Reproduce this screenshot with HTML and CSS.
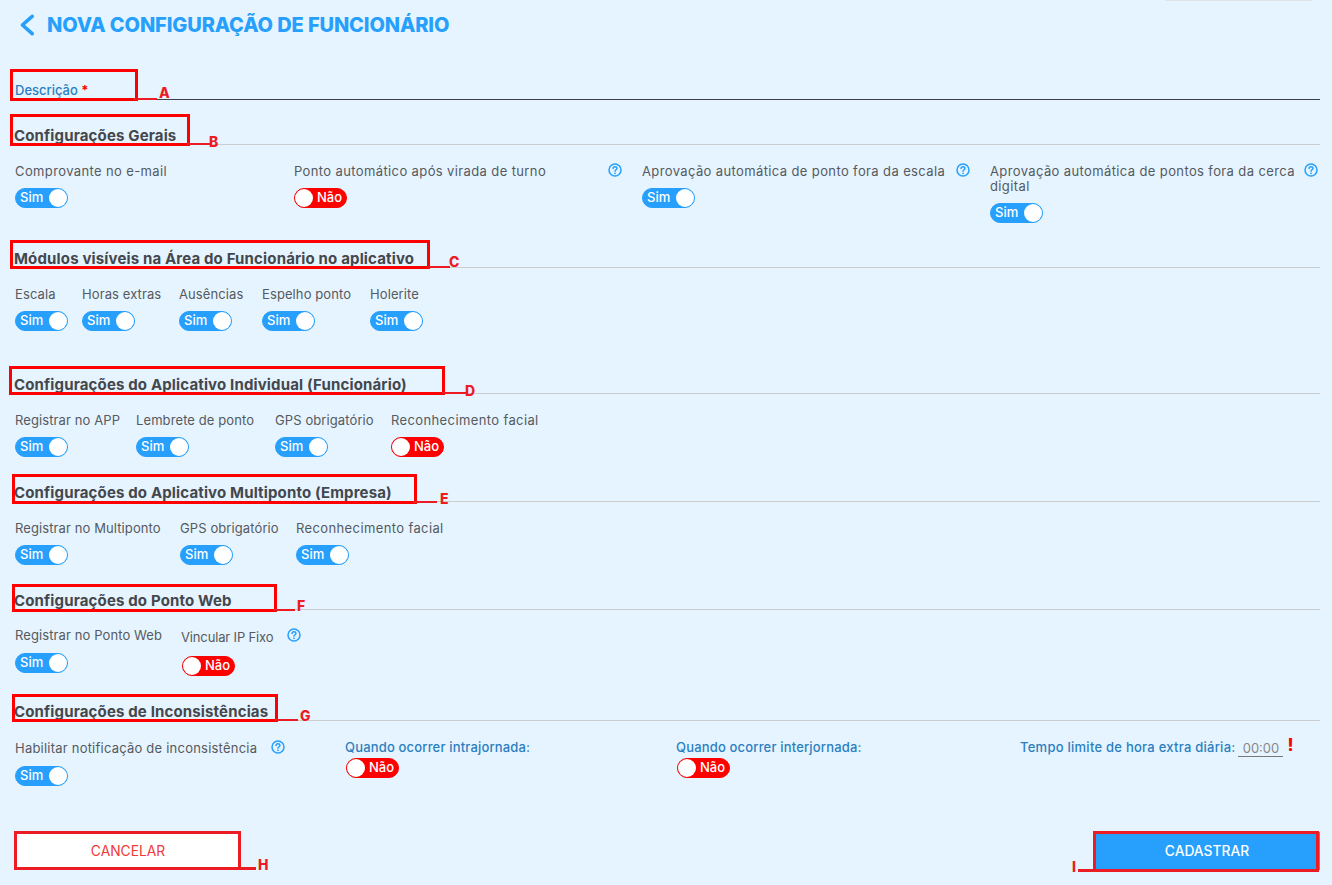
FILE: index.html
```html
<!DOCTYPE html>
<html lang="pt-BR">
<head>
<meta charset="utf-8">
<title>Nova configuração de funcionário</title>
<link rel="stylesheet" href="styles.css">
</head>
<body>
<svg class="defs" width="0" height="0" aria-hidden="true">
  <symbol id="help" viewBox="0 0 14 14">
    <circle cx="7" cy="7" r="6" fill="none" stroke="currentColor" stroke-width="1.5"/>
    <path d="M5.1 5.5C5.1 4.4 5.9 3.7 7 3.7S8.9 4.4 8.9 5.4C8.9 6.7 7 6.8 7 8.3" fill="none" stroke="currentColor" stroke-width="1.5" stroke-linecap="round"/>
    <circle cx="7" cy="10.3" r=".9" fill="currentColor"/>
  </symbol>
</svg>
<div class="page">
  <div class="topmark"></div>
  <main class="main">
    <header class="header">
      <svg class="back" viewBox="0 0 16 24" width="16" height="24" aria-hidden="true"><path d="M13.2 3.3 3.4 12l9.8 8.7" fill="none" stroke="currentColor" stroke-width="3.6" stroke-linecap="round" stroke-linejoin="round"/></svg>
      <h1 class="title">NOVA CONFIGURAÇÃO DE FUNCIONÁRIO</h1>
    </header>
    <div class="field"><span class="field-label">Descrição <b>*</b></span></div>

    <section class="section">
      <h2 class="heading">Configurações Gerais</h2>
      <div class="row cols-1">
        <div class="item"><div class="label label-wide">Comprovante no e-mail</div><div class="toggle on"><span>Sim</span><i></i></div></div>
        <div class="item"><div class="label-help"><div class="label label-wide">Ponto automático após virada de turno</div><svg class="help"><use href="#help"/></svg></div><div class="toggle off"><i></i><span>Não</span></div></div>
        <div class="item"><div class="label-help"><div class="label label-wide">Aprovação automática de ponto fora da escala</div><svg class="help"><use href="#help"/></svg></div><div class="toggle on"><span>Sim</span><i></i></div></div>
        <div class="item"><div class="label-help"><div class="label label-wide wrap">Aprovação automática de pontos fora da cerca digital</div><svg class="help"><use href="#help"/></svg></div><div class="toggle on"><span>Sim</span><i></i></div></div>
      </div>
    </section>

    <section class="section section-tall">
      <h2 class="heading">Módulos visíveis na Área do Funcionário no aplicativo</h2>
      <div class="row cols-2">
        <div class="item"><div class="label">Escala</div><div class="toggle on"><span>Sim</span><i></i></div></div>
        <div class="item"><div class="label">Horas extras</div><div class="toggle on"><span>Sim</span><i></i></div></div>
        <div class="item"><div class="label">Ausências</div><div class="toggle on"><span>Sim</span><i></i></div></div>
        <div class="item"><div class="label">Espelho ponto</div><div class="toggle on"><span>Sim</span><i></i></div></div>
        <div class="item"><div class="label">Holerite</div><div class="toggle on"><span>Sim</span><i></i></div></div>
      </div>
    </section>

    <section class="section">
      <h2 class="heading">Configurações do Aplicativo Individual (Funcionário)</h2>
      <div class="row cols-3">
        <div class="item"><div class="label">Registrar no APP</div><div class="toggle on"><span>Sim</span><i></i></div></div>
        <div class="item"><div class="label">Lembrete de ponto</div><div class="toggle on"><span>Sim</span><i></i></div></div>
        <div class="item"><div class="label">GPS obrigatório</div><div class="toggle on"><span>Sim</span><i></i></div></div>
        <div class="item"><div class="label label-wide">Reconhecimento facial</div><div class="toggle off"><i></i><span>Não</span></div></div>
      </div>
    </section>

    <section class="section">
      <h2 class="heading">Configurações do Aplicativo Multiponto (Empresa)</h2>
      <div class="row cols-4">
        <div class="item"><div class="label">Registrar no Multiponto</div><div class="toggle on"><span>Sim</span><i></i></div></div>
        <div class="item"><div class="label">GPS obrigatório</div><div class="toggle on"><span>Sim</span><i></i></div></div>
        <div class="item"><div class="label label-wide">Reconhecimento facial</div><div class="toggle on"><span>Sim</span><i></i></div></div>
      </div>
    </section>

    <section class="section section-web">
      <h2 class="heading">Configurações do Ponto Web</h2>
      <div class="row cols-5">
        <div class="item item-up"><div class="label">Registrar no Ponto Web</div><div class="toggle on"><span>Sim</span><i></i></div></div>
        <div class="item item-low"><div class="label-inline"><div class="label">Vincular IP Fixo</div><svg class="help"><use href="#help"/></svg></div><div class="toggle off"><i></i><span>Não</span></div></div>
      </div>
    </section>

    <section class="section section-last">
      <h2 class="heading">Configurações de Inconsistências</h2>
      <div class="row cols-6">
        <div class="item item-notify"><div class="label-inline"><div class="label">Habilitar notificação de inconsistência</div><svg class="help"><use href="#help"/></svg></div><div class="toggle on"><span>Sim</span><i></i></div></div>
        <div class="item item-when"><div class="label label-blue">Quando ocorrer intrajornada:</div><div class="toggle off"><i></i><span>Não</span></div></div>
        <div class="item item-when"><div class="label label-blue">Quando ocorrer interjornada:</div><div class="toggle off"><i></i><span>Não</span></div></div>
        <div class="limit"><span class="label label-blue limit-label">Tempo limite de hora extra diária:</span><span class="time">00:00</span><b class="bang">!</b></div>
      </div>
    </section>

    <footer class="actions">
      <button class="btn btn-cancel" type="button">CANCELAR</button>
      <button class="btn btn-save" type="button">CADASTRAR</button>
    </footer>
  </main>

  <div class="mark mark-a"><span>A</span></div>
  <div class="mark mark-b"><span>B</span></div>
  <div class="mark mark-c"><span>C</span></div>
  <div class="mark mark-d"><span>D</span></div>
  <div class="mark mark-e"><span>E</span></div>
  <div class="mark mark-f"><span>F</span></div>
  <div class="mark mark-g"><span>G</span></div>
  <div class="mark mark-h"><span>H</span></div>
  <div class="mark mark-i"><span>I</span></div>
</div>
</body>
</html>
```
FILE: styles.css
```css
* { box-sizing: border-box; }
html, body { margin: 0; padding: 0; }
body {
  background: #e6f4ff;
  font-family: Inter, "Noto Sans", "Liberation Sans", sans-serif;
  color: #555a60;
}
.defs { position: absolute; }
.page { position: relative; width: 1332px; height: 885px; overflow: hidden; }
.topmark { position: absolute; left: 1165px; top: 0; width: 147px; height: 1px; background: #e4e4e4; }
.main { padding: 0 12px 0 14px; }

.header { display: flex; align-items: center; height: 50px; padding-left: 5px; color: #26a0fc; }
.back { flex: none; margin-right: 13px; }
.title { margin: 0 0 0 -1px; font-size: 20px; font-weight: 800; color: #26a0fc; letter-spacing: -0.12px; white-space: nowrap; }

.field { height: 20px; margin-top: 30px; margin-bottom: 21px; border-bottom: 1px solid #3c4048; padding-left: 1px; line-height: 19px; }
.field-label { font-size: 13px; font-weight: 500; color: #2a7fc0; letter-spacing: 0; }
.field-label b { color: #f00; font-weight: 700; }

.section { margin-bottom: 21px; }
.section-tall { margin-bottom: 39px; }
.section-web { margin-bottom: 21px; }
.section-last { margin-bottom: 0; }
.heading { margin: 0; height: 24px; line-height: 29px; border-bottom: 1px solid #ccc; font-size: 15px; font-weight: 700; letter-spacing: .15px; color: #44474c; white-space: nowrap; }

.row { display: grid; padding: 19px 0 0 1px; }
.cols-1 { grid-template-columns: 279px 348px 348px 1fr; }
.cols-2 { grid-template-columns: 67px 97px 83px 108px 1fr; }
.cols-3 { grid-template-columns: 121px 139px 116px 1fr; }
.cols-4 { grid-template-columns: 165px 116px 1fr; }
.cols-5 { grid-template-columns: 166px 1fr; }
.cols-6 { grid-template-columns: 330px 331px 344px 1fr; padding-top: 20px; }

.label { font-size: 13px; line-height: 15px; letter-spacing: .1px; color: #555a60; white-space: nowrap; }
.label-wide { letter-spacing: .38px; }
.label.wrap { white-space: normal; }
.label-blue { font-weight: 500; letter-spacing: .17px; color: #2a7fc0; }
.limit-label { letter-spacing: .25px; }
.label-help { display: flex; justify-content: space-between; width: 328px; }
.label-inline { display: flex; gap: 14px; }
.help { flex: none; width: 14px; height: 14px; margin-top: -1px; color: #26a0fc; }

.toggle {
  display: flex; align-items: center; justify-content: space-between;
  width: 53px; height: 20px; margin-top: 9px;
  border-radius: 10px; padding: 0 1px;
  font-size: 13px; font-weight: 500; color: #fff;
}
.toggle span { padding-bottom: 2px; }
.toggle i { flex: none; width: 18px; height: 18px; border-radius: 50%; background: #fff; }
.toggle.on { background: #26a0fc; padding-left: 4px; border: 1px solid #26a0fc; padding-right: 0; }
.toggle.off { background: #f00; padding-right: 4px; border: 1px solid #f00; padding-left: 0; }

.item-up .label { margin-top: -1px; }
.item-up .toggle { margin-top: 10px; }
.item-low { padding-top: 1px; }
.item-low .label { letter-spacing: -.15px; }
.item-low .toggle { margin-top: 11px; margin-left: 1px; }
.item-low .help { margin-top: -2px; }
.item-notify .label { letter-spacing: .22px; }
.item-notify .toggle { margin-top: 10px; }
.item-when { margin-top: -1px; }
.item-when .toggle { margin-top: 3px; margin-left: 1px; }

.limit { display: flex; align-items: flex-start; margin-top: -1px; }
.time { width: 45px; margin-left: 3px; height: 17px; line-height: 16px; border-bottom: 1px solid #777; text-align: center; font-size: 13px; color: #888; }
.bang { margin-left: 4px; margin-top: -3px; font-size: 17px; line-height: 17px; font-weight: 800; color: #f00; }

.actions { display: flex; justify-content: space-between; margin-top: 46px; }
.btn { width: 226px; height: 38px; border: 0; padding: 0 0 1px; font-family: inherit; font-size: 13.8px; }
.btn-cancel { margin-left: 1px; background: #fff; color: #f03a3a; }
.btn-save { background: #26a0fc; color: #fff; font-weight: 500; }

.mark { position: absolute; border: 3px solid #f00; }
.mark::after { content: ""; position: absolute; height: 2px; background: #ed1c24; bottom: -2px; }
.mark span { position: absolute; font-size: 14px; line-height: 14px; font-weight: 800; color: #ed1c24; }
.mark-a { left: 10px; top: 69px; width: 128px; height: 32px; }
.mark-a::after { left: 120px; width: 24px; }
.mark-a span { left: 146px; top: 14px; }
.mark-b { left: 10px; top: 114px; width: 180px; height: 32px; }
.mark-b::after { left: 174px; width: 23px; }
.mark-b span { left: 196px; top: 18px; }
.mark-c { left: 10px; top: 240px; width: 420px; height: 29px; }
.mark-c::after { left: 414px; width: 23px; }
.mark-c span { left: 436px; top: 12px; }
.mark-d { left: 9px; top: 366px; width: 436px; height: 29px; }
.mark-d::after { left: 430px; width: 24px; }
.mark-d span { left: 453px; top: 15px; }
.mark-e { left: 12px; top: 474px; width: 405px; height: 30px; }
.mark-e::after { left: 398px; width: 24px; }
.mark-e span { left: 425px; top: 15px; }
.mark-f { left: 12px; top: 584px; width: 265px; height: 28px; }
.mark-f::after { left: 259px; width: 21px; }
.mark-f span { left: 282px; top: 12px; }
.mark-g { left: 12px; top: 694px; width: 266px; height: 28px; }
.mark-g::after { left: 260px; width: 23px; }
.mark-g span { left: 285px; top: 12px; }
.mark-h { left: 14px; top: 831px; width: 227px; height: 39px; border-color: #ed1c24; }
.mark-h::after { left: 224px; width: 15px; height: 3px; bottom: -3px; }
.mark-h span { left: 241px; top: 24px; }
.mark-i { left: 1093px; top: 831px; width: 226px; height: 41px; border-color: #ed1c24; }
.mark-i::after { left: -18px; width: 15px; height: 3px; bottom: -3px; }
.mark-i span { left: -24px; top: 26px; }
```
